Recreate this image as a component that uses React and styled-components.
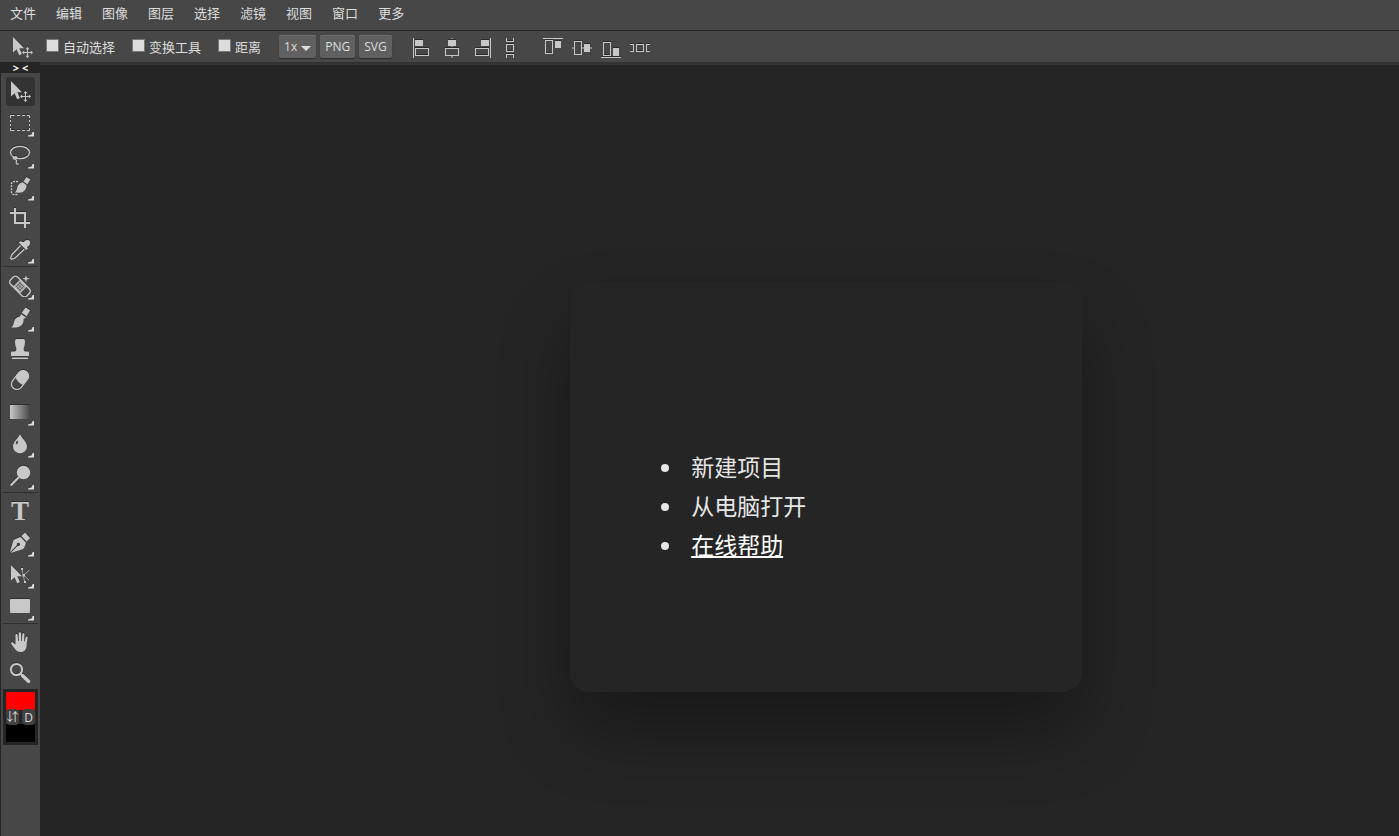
import React, { useState } from 'react';
import styled, { createGlobalStyle } from 'styled-components';

const GlobalStyle = createGlobalStyle`
  * {
    box-sizing: border-box;
  }
  body {
    margin: 0;
    background: #252525;
    color: #dddddd;
    font-family: 'Open Sans', 'Noto Sans CJK SC', sans-serif;
    font-size: 13px;
  }
  button {
    font: inherit;
    color: inherit;
    border: none;
    padding: 0;
    margin: 0;
    background: none;
  }
`;

const menus = ['文件', '编辑', '图像', '图层', '选择', '滤镜', '视图', '窗口', '更多'];

const toggles = [
  { id: 'auto', label: '自动选择' },
  { id: 'transform', label: '变换工具' },
  { id: 'distance', label: '距离' },
];

const crisp = { shapeRendering: 'crispEdges' };
const line = { fill: 'none', stroke: 'currentColor' };

const MoveIcon = () => (
  <svg width='22' height='22' viewBox='0 0 22 22' fill='currentColor'>
    <path d='M2 1v15.500l3.600-3.300 2.600 6 2.700-1.200-2.600-5.700h4.700z' />
    <path d='M16.500 12.500v8M12.500 16.500h8' stroke='currentColor' />
    <path d='M16.500 11l2 2.200h-4zM16.500 22l2-2.200h-4zM11 16.500l2.200-2v4zM22 16.500l-2.200-2v4z' />
  </svg>
);

const alignLeft = [
  {
    label: '左对齐',
    icon: (
      <svg width='20' height='20' fill='currentColor' {...crisp}>
        <path d='M2 0h1v20h-1zM4 2h8v6h-8z' />
        <rect x='4.500' y='10.500' width='13' height='7' {...line} />
      </svg>
    ),
  },
  {
    label: '水平居中',
    icon: (
      <svg width='20' height='20' fill='currentColor' {...crisp}>
        <path d='M9 0h2v20h-2z' opacity='.5' />
        <path d='M6 2h8v6h-8z' />
        <rect x='3.500' y='10.500' width='13' height='7' fill='#474747' stroke='currentColor' />
      </svg>
    ),
  },
  {
    label: '右对齐',
    icon: (
      <svg width='20' height='20' fill='currentColor' {...crisp}>
        <path d='M17 0h1v20h-1zM8 2h8v6h-8z' />
        <rect x='2.500' y='10.500' width='13' height='7' {...line} />
      </svg>
    ),
  },
  {
    label: '垂直分布',
    icon: (
      <svg width='20' height='20' {...line} {...crisp}>
        <path d='M2.500 0v3.500h7v-3.500M2.500 20v-3.500h7v3.500' />
        <rect x='2.500' y='6.500' width='7' height='7' />
      </svg>
    ),
  },
];

const alignTop = [
  {
    label: '顶对齐',
    icon: (
      <svg width='20' height='20' fill='currentColor' {...crisp}>
        <path d='M0 0h20v1h-20zM12 3h6v7h-6z' />
        <rect x='2.500' y='2.500' width='7' height='13' {...line} />
      </svg>
    ),
  },
  {
    label: '垂直居中',
    icon: (
      <svg width='20' height='20' fill='currentColor' {...crisp}>
        <path d='M0 9h20v2h-20z' opacity='.5' />
        <path d='M12 6h6v8h-6z' />
        <rect x='2.500' y='3.500' width='7' height='13' fill='#474747' stroke='currentColor' />
      </svg>
    ),
  },
  {
    label: '底对齐',
    icon: (
      <svg width='20' height='20' fill='currentColor' {...crisp}>
        <path d='M0 19h20v1h-20zM12 10h6v8h-6z' />
        <rect x='2.500' y='4.500' width='7' height='13' {...line} />
      </svg>
    ),
  },
  {
    label: '水平分布',
    icon: (
      <svg width='20' height='20' {...line} {...crisp}>
        <path d='M0 6.500h3.500v7h-3.500M20 6.500h-3.500v7h3.500' />
        <rect x='6.500' y='6.500' width='7' height='7' />
      </svg>
    ),
  },
];

const Icon = ({ children }) => (
  <svg width='22' height='22' viewBox='0 0 22 22' fill='currentColor'>
    {children}
  </svg>
);

const toolGroups = () => [
  [
    { id: 'move', label: '移动工具', icon: <MoveIcon /> },
    {
      id: 'marquee',
      label: '矩形选框',
      more: true,
      icon: (
        <Icon>
          <path
            d='M1.500 6v-2.500h4M8 3.500h3M13 3.500h3M18 3.500h2.500v2.500M20.500 8v2M20.500 12v2M20.500 16v2.500h-2.500M16 18.500h-3M11 18.500h-3M5.500 18.500h-4v-2.500M1.500 14v-2M1.500 10v-2'
            {...line}
          />
        </Icon>
      ),
    },
    {
      id: 'lasso',
      label: '套索工具',
      more: true,
      icon: (
        <Icon>
          <g {...line} strokeWidth='1.300'>
            <ellipse cx='11' cy='8.500' rx='9.500' ry='6.200' />
            <path d='M4.500 13c-.6 1.300.2 2.300 1.600 2.100 1.500-.3 2-1.700 1.200-2.300-.9-.6-2 .3-1.300 1.700.7 1.300 2 1.600 1.400 2.900-.4.9-.6 1.900.4 2.400.6.3 1.200.2 1.800-.1' />
          </g>
        </Icon>
      ),
    },
    {
      id: 'quick',
      label: '快速选择',
      more: true,
      icon: (
        <Icon>
          <path d='M17.500 1l3.800 2.600-3 4.600-3.800-2.800zM13.800 6.200l3.600 2.900c.3 3.400-1.800 6.900-5.400 7.500-2.400.4-4.800-.1-6.500 0 1.800-1.200 2.200-3 2.800-5.400.8-3 3-4.600 5.500-5z' />
          <path d='M9 5.500H5a2.500 2.500 0 0 0-2.500 2.500v8a2.500 2.500 0 0 0 2.500 2.500H9' {...line} strokeWidth='1.400' strokeDasharray='2 1' />
        </Icon>
      ),
    },
    {
      id: 'crop',
      label: '裁剪工具',
      icon: (
        <Icon>
          <path d='M1 6h15v15M6 1v15h15' {...line} strokeWidth='2' />
        </Icon>
      ),
    },
    {
      id: 'eyedropper',
      label: '吸管工具',
      more: true,
      icon: (
        <Icon>
          <path d='M15 3c1.600-2.300 4.200-2.400 5.400-1.200s1 3.900-1.300 5.300l-1 .8.8 1.500-1.600 1.600-7.300-7.300 1.600-1.600 1.600.9z' />
          <path d='M11.500 6.500L3 15.500c-.8 1.200-.6 2.200-1.500 3.600l1.200 1.200c1.500-.9 2.500-.6 3.600-1.500l9-8.500' {...line} strokeWidth='1.300' />
        </Icon>
      ),
    },
  ],
  [
    {
      id: 'heal',
      label: '修复画笔',
      more: true,
      icon: (
        <Icon>
          <g transform='rotate(45 11 11.500)'>
            <rect x='-.5' y='6.500' width='23' height='10' rx='3.500' {...line} strokeWidth='1.500' />
            <path d='M6 6.500h10v10H6z' opacity='.85' />
            <path d='M8.500 8v7M11 8v7M13.500 8v7M7.500 9h7M7.500 11.500h7M7.500 14h7' stroke='#474747' strokeWidth='.7' />
          </g>
          <path d='M17 0l.9 2.700 2.900.9-2.900.9-.9 2.900-.9-2.900-2.900-.9 2.900-.9z' />
        </Icon>
      ),
    },
    {
      id: 'brush',
      label: '画笔工具',
      more: true,
      icon: (
        <Icon>
          <path d='M16.500.5L21 3.200l-3.300 6-5-3.400zM12 7l5 3.400c-.8.8-1.800.8-2.500 1.600.7 4.300-2.500 7.500-6 8.300-2.200.5-4.500.2-6.500.2 2-1 2.400-3 3-5.500.7-3.300 3-5.400 6-5.600z' />
        </Icon>
      ),
    },
    {
      id: 'stamp',
      label: '图章工具',
      icon: (
        <Icon>
          <path d='M6 3.500C6 1.500 7 1 8 1h6c1 0 2 .5 2 2.500 0 2.500-.5 4.500-1.300 6.500-.4 1.500.3 3.500 1.800 3.500H19c.8 0 1 .3 1 1V18H2v-3.500c0-.7.2-1 1-1h2.500c1.500 0 2.200-2 1.800-3.500C6.500 8 6 6 6 3.500zM3 19.500h16V21H3z' />
        </Icon>
      ),
    },
    {
      id: 'eraser',
      label: '橡皮擦',
      icon: (
        <Icon>
          <g transform='rotate(38 11 11)'>
            <rect x='5.500' y='.5' width='11' height='21' rx='5.500' {...line} strokeWidth='1.300' />
            <path d='M5.500 11V6a5.500 5.500 0 0 1 11 0v7c-3 1-8.500 1-11-2z' />
          </g>
        </Icon>
      ),
    },
    {
      id: 'gradient',
      label: '渐变工具',
      more: true,
      icon: (
        <Icon>
          <defs>
            <linearGradient id='fade'>
              <stop offset='0' stopColor='#c8c8c8' />
              <stop offset='1' stopColor='#474747' />
            </linearGradient>
          </defs>
          <rect x='1' y='4' width='20' height='14' fill='url(#fade)' />
        </Icon>
      ),
    },
    {
      id: 'blur',
      label: '模糊工具',
      more: true,
      icon: (
        <Icon>
          <path d='M11 1c1 3.500 7 7.500 7 12.500a7 6.800 0 0 1-14 0C4 8.500 10 4.500 11 1z' />
          <ellipse cx='8' cy='9.500' rx='1' ry='1.900' fill='#474747' transform='rotate(25 8 9.500)' />
        </Icon>
      ),
    },
    {
      id: 'dodge',
      label: '减淡工具',
      more: true,
      icon: (
        <Icon>
          <circle cx='14.500' cy='7.500' r='6.700' />
          <path d='M10 12l-8.300 8.500' stroke='currentColor' strokeWidth='2' />
        </Icon>
      ),
    },
  ],
  [
    { id: 'type', label: '文字工具', icon: <TypeLetter>T</TypeLetter> },
    {
      id: 'pen',
      label: '钢笔工具',
      more: true,
      icon: (
        <Icon>
          <path d='M16 .5L21 6l-3.300 3.600-5.300-5.500zM11.500 5l5.500 5.700c-1 2.200-1 4.300-2.800 6.300L1.500 21l7.200-7.200a1.600 1.600 0 1 0-.7-.7L.9 20.300 4.300 8.500C6.500 6.500 9 6.300 11.500 5z' />
        </Icon>
      ),
    },
    {
      id: 'path',
      label: '路径选择',
      more: true,
      icon: (
        <Icon>
          <path d='M2 1v15.500l3.600-3.300 2.600 6 2.700-1.200-2.600-5.700h4.700zM12 4h2v2h-2zM13.500 10H16v2.500h-2.500zM15 17h2v2h-2z' />
          <path d='M13 5c.8 5 1.500 9 3 13M20.500 6l-6 5 5.500 5' {...line} opacity='.7' />
        </Icon>
      ),
    },
    {
      id: 'shape',
      label: '矩形工具',
      more: true,
      icon: (
        <Icon>
          <rect x='1' y='3' width='20' height='14' rx='1' />
        </Icon>
      ),
    },
  ],
  [
    {
      id: 'hand',
      label: '抓手工具',
      icon: (
        <Icon>
          <path d='M6.500 11V4.200c0-1.600 2-1.600 2.100 0l.6 5.800h.6V2.400c0-1.700 2.200-1.700 2.200 0V10h.6l.8-6.700c.2-1.500 2.100-1.300 2 .2L15 10.500h.5l1.300-4.300c.5-1.300 2.100-.9 1.800.5-.7 3.400-.7 5.500-1 8.300-.4 3.800-2.300 6-5.700 6-4.600 0-6.200-3.300-9.500-8-.9-1.400.6-2.300 1.900-1.300l2.200 1.800z' />
        </Icon>
      ),
    },
    {
      id: 'zoom',
      label: '缩放工具',
      icon: (
        <Icon>
          <circle cx='7.500' cy='7.500' r='5.600' {...line} strokeWidth='2' />
          <path d='M11.500 11.500l2 2' stroke='currentColor' strokeWidth='2' />
          <path d='M14 14l5.500 5.300' stroke='currentColor' strokeWidth='3.600' strokeLinecap='round' />
        </Icon>
      ),
    },
  ],
];

const App = () => {
  const [tool, setTool] = useState('move');

  return (
    <Page>
      <GlobalStyle />
      <MenuBar>
        {menus.map((name) => (
          <MenuButton key={name}>{name}</MenuButton>
        ))}
      </MenuBar>
      <OptionsBar>
        <CurrentTool>
          <MoveIcon />
        </CurrentTool>
        {toggles.map(({ id, label }) => (
          <Toggle key={id} htmlFor={id}>
            <input id={id} type='checkbox' />
            {label}
          </Toggle>
        ))}
        <Exports>
          <SmallButton>
            1x
            <svg width='10' height='8' fill='currentColor'>
              <path d='M0 3h10l-5 5z' />
            </svg>
          </SmallButton>
          <SmallButton>PNG</SmallButton>
          <SmallButton>SVG</SmallButton>
        </Exports>
        <AlignGroup $gap='11px'>
          {alignLeft.map(({ label, icon }) => (
            <AlignButton key={label} aria-label={label}>
              {icon}
            </AlignButton>
          ))}
        </AlignGroup>
        <AlignGroup $gap='9px'>
          {alignTop.map(({ label, icon }) => (
            <AlignButton key={label} aria-label={label}>
              {icon}
            </AlignButton>
          ))}
        </AlignGroup>
      </OptionsBar>
      <Workspace>
        <Side>
          <Collapse>&gt; &lt;</Collapse>
          <ToolBar>
            {toolGroups().map((group, index) => (
              <ToolGroup key={index}>
                {group.map(({ id, label, more, icon }) => (
                  <ToolCell key={id} $more={more}>
                    <ToolButton aria-label={label} $active={id === tool} onClick={() => setTool(id)}>
                      {icon}
                      {more && <Corner />}
                    </ToolButton>
                  </ToolCell>
                ))}
              </ToolGroup>
            ))}
            <Colors>
              <Swatch aria-label='前景色' $color='#ff0000' />
              <ColorActions>
                <ColorButton>⇵</ColorButton>
                <ColorButton>D</ColorButton>
              </ColorActions>
              <Swatch aria-label='背景色' $color='#000000' />
            </Colors>
          </ToolBar>
        </Side>
        <Canvas>
          <Card>
            <StartList>
              <li>新建项目</li>
              <li>从电脑打开</li>
              <li>
                <a href='#help'>在线帮助</a>
              </li>
            </StartList>
          </Card>
        </Canvas>
      </Workspace>
    </Page>
  );
};

const Page = styled.div`
  display: flex;
  flex-direction: column;
  min-height: 100vh;
`;

const MenuBar = styled.nav`
  display: flex;
  height: 31px;
  background: #474747;
  border-bottom: 1px solid #252525;
`;

const MenuButton = styled.button`
  padding: 0 10px;
  line-height: 26px;
  height: 26px;
`;

const OptionsBar = styled.div`
  display: flex;
  align-items: center;
  height: 34px;
  padding-left: 11px;
  background: #474747;
  border-bottom: 3px solid #333333;
`;

const CurrentTool = styled.span`
  display: flex;
  width: 35px;
  color: #c8c8c8;
`;

const Toggle = styled.label`
  display: flex;
  align-items: center;
  gap: 4px;
  margin-right: 17px;

  input {
    appearance: none;
    width: 13px;
    height: 13px;
    margin: 0 0 3px;
    background: #dcdcdc;
    border: 1px solid #767676;
  }
`;

const Exports = styled.div`
  display: flex;
  gap: 4px;
  padding-left: 1px;
`;

const SmallButton = styled.button`
  display: flex;
  align-items: center;
  gap: 4px;
  height: 23px;
  padding: 0 5px;
  background: #606060;
  border-radius: 2px;
  box-shadow: 0 1px 1px #2b2b2b, inset 0 1px 0 #6e6e6e;
  font-size: 12px;
`;

const AlignGroup = styled.div`
  display: flex;
  gap: ${({ $gap }) => $gap};
  margin: 3px 0 0 19px;
  color: #c8c8c8;
`;

const AlignButton = styled.button`
  display: flex;

  path,
  rect {
    filter: drop-shadow(0 -1px 0 #2b2b2b);
  }
`;

const Workspace = styled.div`
  display: flex;
  flex: 1;
`;

const Side = styled.aside`
  display: flex;
  flex-direction: column;
  width: 40px;
  margin-top: -3px;
  padding-left: 1px;
  background: #252525;
`;

const Collapse = styled.button`
  height: 11px;
  line-height: 12px;
  color: #ffffff;
  font-size: 11px;
  font-weight: bold;
`;

const ToolBar = styled.div`
  flex: 1;
  padding: 3px 2px 0;
  background: #474747;
`;

const ToolGroup = styled.div`
  display: flex;
  flex-direction: column;
  align-items: center;

  & + & {
    padding-top: 3px;
    border-top: 1px solid #303030;
  }
`;

const ToolCell = styled.div`
  display: flex;
  align-items: center;
  height: ${({ $more }) => ($more ? '32px' : '31px')};
`;

const ToolButton = styled.button`
  position: relative;
  display: grid;
  place-items: center;
  width: 29px;
  height: 29px;
  padding: 0 1px 1px 0;
  border-radius: 3px;
  color: #c8c8c8;
  background: ${({ $active }) => ($active ? '#333333' : 'none')};

  svg {
    filter: drop-shadow(0 -1px 0 #303030);
  }
`;

const TypeLetter = styled.span`
  font-family: 'Liberation Serif', serif;
  font-size: 27px;
  font-weight: bold;
  line-height: 28px;
  text-shadow: 0 -1px 0 #303030;
`;

const Corner = styled.span`
  position: absolute;
  right: 1px;
  bottom: 1px;
  width: 6px;
  height: 5px;
  background: #dddddd;
  clip-path: polygon(80% 0, 100% 0, 100% 100%, 0 100%, 0 80%, 60% 60%);
`;

const Colors = styled.div`
  display: flex;
  flex-direction: column;
  padding: 3px;
  background: #252525;
`;

const Swatch = styled.button`
  height: 18px;
  background: ${({ $color }) => $color};
`;

const ColorActions = styled.div`
  position: relative;
  display: flex;
  align-items: center;
  justify-content: space-between;
  height: 14px;
`;

const ColorButton = styled.button`
  width: 13px;
  height: 16px;
  line-height: 17px;
  border-radius: 4px;
  background: #404040;
  font-size: 12px;
`;

const Canvas = styled.main`
  display: grid;
  flex: 1;
  grid-template-columns: 5fr minmax(auto, 512px) 3fr;
  grid-template-rows: 3fr auto 2fr;
  padding-left: 2px;
  overflow: hidden;
`;

const Card = styled.section`
  grid-area: 2 / 2;
  min-height: 410px;
  padding: 166px 80px 124px;
  border-radius: 20px;
  box-shadow: 0 40px 70px rgba(0, 0, 0, 0.33);
`;

const StartList = styled.ul`
  margin: 0;
  padding-left: 34px;
  color: #e6e6e6;
  font-size: 23px;
  line-height: 39px;

  li {
    padding-left: 7px;
  }

  a {
    color: #ffffff;
  }
`;

export default App;
